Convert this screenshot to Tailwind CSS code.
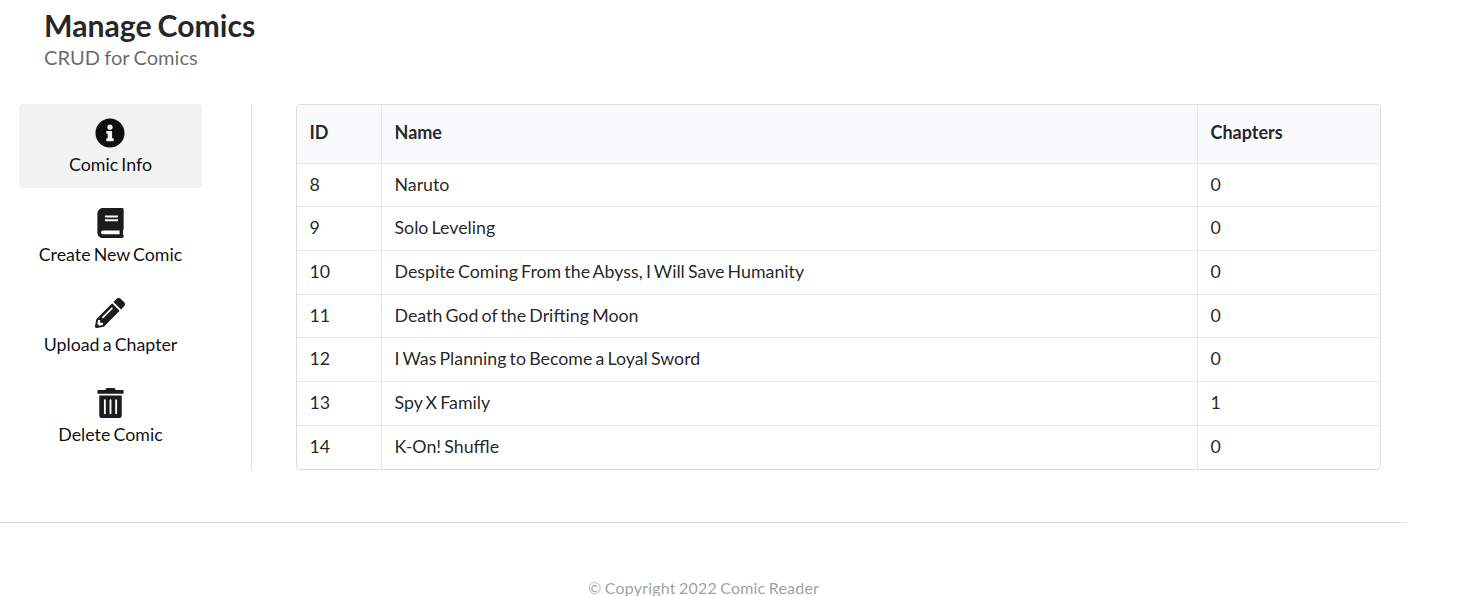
<!DOCTYPE html>
<html lang="en"><head><meta charset="utf-8"><title>Manage Comics</title>
<script src="https://cdn.jsdelivr.net/npm/@tailwindcss/browser@4"></script></head>
<body class="h-[596px] overflow-hidden bg-white font-['Lato',sans-serif] text-[17.8px] leading-[21px] text-black/87 [word-spacing:-1.4px]">
<header class="h-[104px] pl-[44px] pt-[6px]">
<h1 class="text-[30.2px] leading-[39px] font-bold [word-spacing:-1.4px]">Manage Comics</h1>
<p class="text-[20.1px] leading-[25px] text-black/60 [word-spacing:-0.9px]">CRUD for Comics</p>
</header>
<main class="flex h-[366px]">
<nav class="flex w-[252px] flex-col gap-[6px] border-r border-[#dededf] pl-[19px] text-black/95">
<a class="flex h-[84px] w-[183px] flex-col items-center rounded bg-[#f2f2f2] pt-[14px]"><svg class="mr-px mb-[6px] size-[30px]" viewBox="0 0 512 512" fill="currentColor"><path d="M256 8C119 8 8 119 8 256s111 248 248 248 248-111 248-248S393 8 256 8zm0 102c26 0 46 20 46 46s-20 46-46 46-46-20-46-46 20-46 46-46zm64 274c0 7-5 12-12 12H204c-7 0-12-5-12-12v-28c0-7 5-12 12-12h12v-76h-12c-7 0-12-5-12-12v-24c0-7 5-12 12-12h76c7 0 12 5 12 12v112h16c7 0 12 5 12 12v28z"/></svg>Comic Info</a>
<a class="flex h-[84px] w-[183px] flex-col items-center pt-[14px]"><svg class="mb-[6px] h-[30px] w-[27px] text-[#1b1c1d]" viewBox="0 0 448 512" fill="currentColor"><path d="M448 360V24c0-13-11-24-24-24H96C43 0 0 43 0 96v320c0 53 43 96 96 96h328c13 0 24-11 24-24v-16c0-8-4-14-9-19-4-15-4-59 0-74 5-4 9-11 9-19zM128 134c0-3 3-6 6-6h212c3 0 6 3 6 6v20c0 3-3 6-6 6H134c-3 0-6-3-6-6v-20zm0 64c0-3 3-6 6-6h212c3 0 6 3 6 6v20c0 3-3 6-6 6H134c-3 0-6-3-6-6v-20zm253 250H96c-18 0-32-14-32-32s14-32 32-32h285c-2 17-2 47 0 64z"/></svg>Create New Comic</a>
<a class="flex h-[84px] w-[183px] flex-col items-center pt-[14px]"><svg class="mr-px mb-[6px] size-[30px] text-[#1b1c1d]" viewBox="0 0 512 512" fill="currentColor"><path d="M498 142l-46 46c-5 5-13 5-17 0L324 77c-5-5-5-12 0-17l46-46c19-19 49-19 68 0l60 60c19 19 19 49 0 68zm-214-42L22 362 0 484c-3 16 12 30 28 28l122-22 262-262c5-5 5-13 0-17L301 100c-4-5-12-5-17 0zM124 340c-5-6-5-14 0-20l154-154c6-5 14-5 20 0s5 14 0 20L144 340c-6 5-14 5-20 0zm-36 84h48v36l-64 12-32-31 12-65h36v48z"/></svg>Upload a Chapter</a>
<a class="flex h-[84px] w-[183px] flex-col items-center pt-[14px]"><svg class="mb-[6px] h-[30px] w-[27px] text-[#1b1c1d]" viewBox="0 0 448 512" fill="currentColor"><path d="M32 464a48 48 0 0 0 48 48h288a48 48 0 0 0 48-48V128H32zm272-256a16 16 0 0 1 32 0v224a16 16 0 0 1-32 0zm-96 0a16 16 0 0 1 32 0v224a16 16 0 0 1-32 0zm-96 0a16 16 0 0 1 32 0v224a16 16 0 0 1-32 0zM432 32H312l-9-19A24 24 0 0 0 281 0H167a24 24 0 0 0-22 13l-9 19H16A16 16 0 0 0 0 48v32a16 16 0 0 0 16 16h416a16 16 0 0 0 16-16V48a16 16 0 0 0-16-16z"/></svg>Delete Comic</a>
</nav>
<div class="ml-[44px] h-[366px] w-[1085px] overflow-hidden rounded border border-[#dededf]">
<table class="w-full table-fixed border-separate border-spacing-0 text-left [&_td]:border-t [&_td]:border-[#e7e7e7] [&_td]:pr-3 [&_td]:pl-[12.5px] [&_th]:pr-3 [&_th]:pl-[12.5px] [&_th]:pb-[3px] [&_th]:text-[18px] [&_th]:font-bold [&_tr>*+*]:border-l [&_tr>*+*]:border-[#e7e7e7]">
<colgroup><col class="w-[84px]"><col class="w-[816px]"><col></colgroup>
<thead><tr class="h-[58px] bg-[#f9fafb]"><th>ID</th><th>Name</th><th>Chapters</th></tr></thead>
<tbody>
<tr class="h-[43px] *:pb-px"><td>8</td><td>Naruto</td><td>0</td></tr>
<tr class="h-[44px] *:pb-[2px]"><td>9</td><td>Solo Leveling</td><td>0</td></tr>
<tr class="h-[44px] *:pb-[2px]"><td>10</td><td>Despite Coming From the Abyss, I Will Save Humanity</td><td>0</td></tr>
<tr class="h-[43px] *:pb-px"><td>11</td><td>Death God of the Drifting Moon</td><td>0</td></tr>
<tr class="h-[44px] *:pb-[2px]"><td>12</td><td>I Was Planning to Become a Loyal Sword</td><td>0</td></tr>
<tr class="h-[44px] *:pb-[2px]"><td>13</td><td>Spy X Family</td><td>1</td></tr>
<tr class="h-[44px] *:pb-[2px]"><td>14</td><td>K-On! Shuffle</td><td>0</td></tr>
</tbody></table></div>
</main>
<footer class="mt-[52px] w-[1407px] border-t border-[#dededf] pt-[54px] text-center text-[16px] tracking-[0.2px] text-black/40 [word-spacing:-1px]">© Copyright 2022 Comic Reader</footer>
</body></html>
